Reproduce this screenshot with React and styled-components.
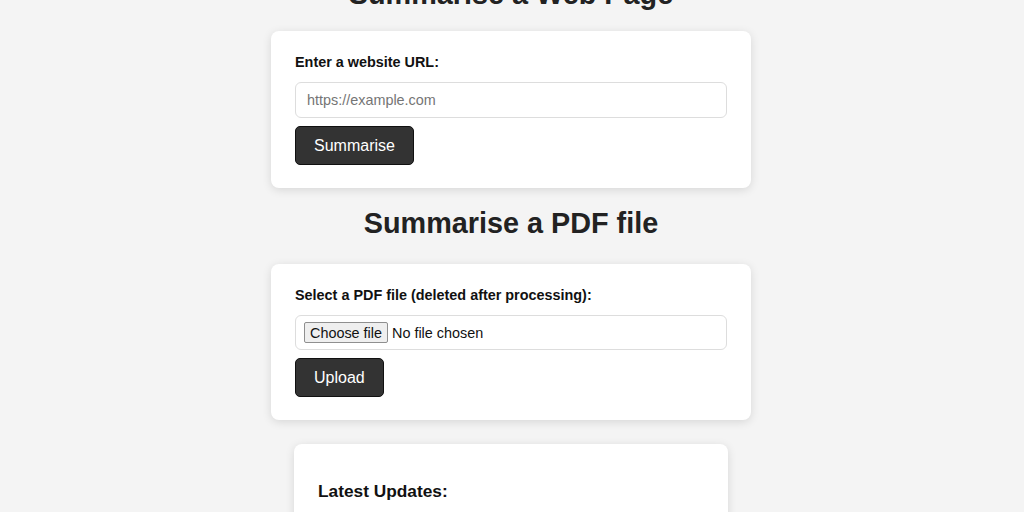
import React from 'react';
import styled, { createGlobalStyle } from 'styled-components';

const GlobalStyle = createGlobalStyle`
  html, body {
    margin: 0;
    padding: 0;
    background: #f4f4f4;
    font-family: "Liberation Sans", Arial, Helvetica, sans-serif;
    color: #111;
    overflow: hidden;
  }
`;

const Page = styled.main`
  display: flex;
  flex-direction: column;
  align-items: center;
  margin-top: -22px;
  padding-right: 2px;
`;

const Title = styled.h2`
  margin: ${(p) => (p.$first ? '0 0 21px' : '19px 0 25px')};
  font-size: 28.8px;
  line-height: 32px;
  font-weight: bold;
  color: #222;
  text-align: center;
`;

const Card = styled.section`
  box-sizing: border-box;
  width: ${(p) => p.$width || 480}px;
  background: #fff;
  border-radius: 8px;
  box-shadow: 0 2px 10px rgba(0, 0, 0, 0.12);
  padding: ${(p) => p.$padding || '22px 24px 23px'};
`;

const Label = styled.label`
  display: block;
  font-size: 14.4px;
  line-height: 18px;
  font-weight: bold;
  color: #111;
  margin-bottom: 11px;
`;

const TextInput = styled.input`
  box-sizing: border-box;
  display: block;
  width: 100%;
  height: 36px;
  padding: 0 11px;
  border: 1px solid #ddd;
  border-radius: 6px;
  font-family: inherit;
  font-size: 14.4px;
  color: #222;
  outline: none;

  &::placeholder {
    color: #757575;
  }
`;

const FileBox = styled.div`
  box-sizing: border-box;
  display: flex;
  align-items: center;
  gap: 4px;
  width: 100%;
  height: 35px;
  padding: 0 8px;
  border: 1px solid #ddd;
  border-radius: 6px;
  font-size: 14.4px;
  color: #111;
`;

const ChooseButton = styled.label`
  box-sizing: border-box;
  display: inline-flex;
  align-items: center;
  height: 21px;
  padding: 0 5px;
  background: #efefef;
  border: 1px solid #8f8f8f;
  border-radius: 2px;
  font-size: 14.4px;
  color: #111;
`;

const HiddenFile = styled.input`
  display: none;
`;

const Button = styled.button`
  box-sizing: border-box;
  display: block;
  height: 39px;
  margin-top: 8px;
  padding: 0 18px;
  background: #333;
  color: #fff;
  border: 1px solid #111;
  border-radius: 5px;
  font-family: inherit;
  font-size: 16px;
  cursor: pointer;
`;

const Updates = styled.h3`
  margin: 0;
  font-size: 17.3px;
  line-height: 21px;
  font-weight: bold;
  color: #111;
`;

const Gap = styled.div`
  height: 24px;
`;

const App = () => {
  return (
    <>
      <GlobalStyle />
      <Page>
        <Title $first>Summarise a Web Page</Title>
        <Card>
          <Label htmlFor="url">Enter a website URL:</Label>
          <TextInput id="url" type="text" placeholder="https://example.com" />
          <Button>Summarise</Button>
        </Card>

        <Title>Summarise a PDF file</Title>
        <Card>
          <Label>Select a PDF file (deleted after processing):</Label>
          <FileBox>
            <ChooseButton htmlFor="pdf">Choose file</ChooseButton>
            <span>No file chosen</span>
            <HiddenFile id="pdf" type="file" accept="application/pdf" />
          </FileBox>
          <Button>Upload</Button>
        </Card>

        <Gap />
        <Card $width={434} $padding="37px 24px 40px">
          <Updates>Latest Updates:</Updates>
        </Card>
      </Page>
    </>
  );
};

export default App;
